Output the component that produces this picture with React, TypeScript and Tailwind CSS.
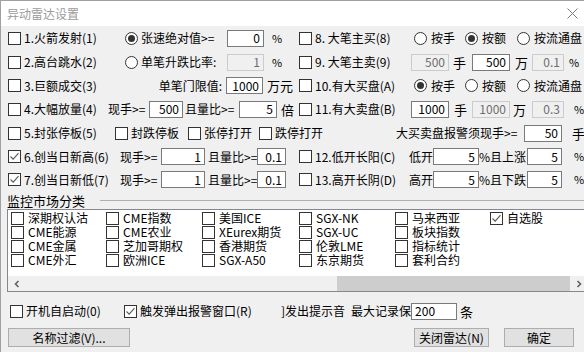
import clsx from "clsx";
import type { ReactNode } from "react";

// checkbox square, optional grey tick
const Box = ({ on }: { on?: boolean }) => (
  <span className="w-[13px] h-[13px] shrink-0 border border-[#333333] bg-white flex items-center justify-center">
    {on && (
      <svg width="11" height="11" viewBox="0 0 11 11">
        <path d="M1.5 5.5 4.2 8.2 9.5 2.2" fill="none" stroke="#5a5a5a" strokeWidth="1.1" />
      </svg>
    )}
  </span>
);

const Dot = ({ on }: { on?: boolean }) => (
  <span className="w-[13px] h-[13px] shrink-0 rounded-full border border-[#333333] bg-white flex items-center justify-center">
    {on && <span className="w-[7px] h-[7px] rounded-full bg-[#333333]" />}
  </span>
);

const Field = ({ v, w, off, left }: { v: string; w: string; off?: boolean; left?: boolean }) => (
  <span
    className={clsx(
      "h-[17px] shrink-0 border flex items-center px-[3px]",
      w,
      off ? "bg-[#f0f0f0] border-[#cccccc] text-[#6d6d6d]" : "bg-white border-[#7a7a7a] text-black",
      left ? "justify-start" : "justify-end"
    )}
  >
    {v}
  </span>
);

const Opt = ({ w, label, on, radio, gap = "ml-[3px]" }: { w?: string; label: string; on?: boolean; radio?: boolean; gap?: string }) => (
  <div className={clsx("flex items-center shrink-0 whitespace-nowrap", w)}>
    {radio ? <Dot on={on} /> : <Box on={on} />}
    <span className={gap}>{label}</span>
  </div>
);

const Txt = ({ cls, children }: { cls?: string; children: ReactNode }) => (
  <span className={clsx("shrink-0 whitespace-nowrap", cls)}>{children}</span>
);

const Row = ({ h, children }: { h: string; children: ReactNode }) => (
  <div className={clsx("flex items-center pl-[7px] shrink-0", h)}>{children}</div>
);

const Pct = ({ cls }: { cls?: string }) => <Txt cls={clsx("text-[11px]", cls)}>%</Txt>;

const Modes = ({ pick }: { pick: number }) => (
  <>
    <Opt w="w-[51px]" radio on={pick === 0} label="按手" gap="ml-[4px]" />
    <Opt w="w-[52px]" radio on={pick === 1} label="按额" gap="ml-[4px]" />
    <Opt radio on={pick === 2} label="按流通盘" gap="ml-[4px]" />
  </>
);

const markets: string[][] = [
  ["深期权认沽", "CME能源", "CME金属", "CME外汇"],
  ["CME指数", "CME农业", "芝加哥期权", "欧洲ICE"],
  ["美国ICE", "XEurex期货", "香港期货", "SGX-A50"],
  ["SGX-NK", "SGX-UC", "伦敦LME", "东京期货"],
  ["马来西亚", "板块指数", "指标统计", "套利合约"],
  ["自选股"],
];
const colW = ["w-[95px]", "w-[96px]", "w-[97px]", "w-[96px]", "w-[95px]", "w-[96px]"];

const Chevron = ({ right }: { right?: boolean }) => (
  <svg width="8" height="8" viewBox="0 0 8 8">
    <path d={right ? "M2.5 1 5.5 4 2.5 7" : "M5.5 1 2.5 4 5.5 7"} fill="none" stroke="#606060" strokeWidth="1.6" />
  </svg>
);

export default function App() {
  return (
    <div className="w-[584px] h-[352px] overflow-hidden bg-[#f0f0f0] border-t border-l border-[#a0a0a0] flex flex-col font-['Noto_Sans_CJK_SC',sans-serif] text-[12px] leading-none text-black">
      {/* title bar */}
      <div className="h-[25px] shrink-0 bg-white flex items-center justify-between pl-[6px] pr-[6px]">
        <span className="text-[12px] text-[#9a9a9a]">异动雷达设置</span>
        <svg width="11" height="11" viewBox="0 0 11 11">
          <path d="M0.5 0.5 10.5 10.5 M10.5 0.5 0.5 10.5" stroke="#7a7a7a" strokeWidth="1" />
        </svg>
      </div>

      <Row h="h-[24px]">
        <Opt w="w-[117px]" label="1.火箭发射(1)" />
        <Opt w="w-[102px]" radio on label="张速绝对值>=" />
        <Field v="0" w="w-[37px]" />
        <Pct cls="w-[35px] pl-[8px]" />
        <Opt w="w-[115px]" label="8. 大笔主买(8)" />
        <Modes pick={1} />
      </Row>

      <Row h="h-[24px]">
        <Opt w="w-[117px]" label="2.高台跳水(2)" />
        <Opt w="w-[102px]" radio label="单笔升跌比率:" />
        <Field v="1" w="w-[37px]" off />
        <Pct cls="w-[35px] pl-[8px]" />
        <Opt w="w-[112px]" label="9. 大笔主卖(9)" />
        <Field v="500" w="w-[38px]" off />
        <Txt cls="w-[23px] pl-[4px] text-[13px]">手</Txt>
        <Field v="500" w="w-[38px]" />
        <Txt cls="w-[22px] pl-[5px] text-[13px]">万</Txt>
        <Field v="0.1" w="w-[32px]" off />
        <Pct cls="pl-[5px]" />
      </Row>

      <Row h="h-[23px]">
        <Opt w="w-[117px]" label="3.巨额成交(3)" />
        <Txt cls="w-[101px] text-right pr-[4px]">单笔门限值:</Txt>
        <Field v="1000" w="w-[37px]" />
        <Txt cls="w-[36px] pl-[4px] text-[13px]">万元</Txt>
        <Opt w="w-[115px]" label="10.有大买盘(A)" />
        <Modes pick={0} />
      </Row>

      <Row h="h-[24px]">
        <Opt w="w-[100px]" label="4.大幅放量(4)" />
        <Txt cls="w-[41px]">现手&gt;=</Txt>
        <Field v="500" w="w-[34px]" />
        <Txt cls="w-[56px] pl-[2px]">且量比&gt;=</Txt>
        <Field v="5" w="w-[38px]" />
        <Txt cls="w-[22px] pl-[4px] text-[13px]">倍</Txt>
        <Opt w="w-[112px]" label="11.有大卖盘(B)" />
        <Field v="1000" w="w-[38px]" />
        <Txt cls="w-[23px] pl-[5px] text-[13px]">手</Txt>
        <Field v="1000" w="w-[38px]" off />
        <Txt cls="w-[22px] pl-[3px] text-[13px]">万</Txt>
        <Field v="0.3" w="w-[32px]" off />
        <Pct cls="pl-[10px]" />
      </Row>

      <Row h="h-[24px]">
        <Opt w="w-[107px]" label="5.封张停板(5)" />
        <Opt w="w-[73px]" label="封跌停板" />
        <Opt w="w-[71px]" label="张停打开" />
        <Opt w="w-[137px]" label="跌停打开" />
        <Txt cls="w-[128px]">大买卖盘报警须现手&gt;=</Txt>
        <Field v="50" w="w-[38px]" />
        <Txt cls="pl-[10px] text-[13px]">手</Txt>
      </Row>

      <Row h="h-[23px]">
        <Opt w="w-[112px]" on label="6.创当日新高(6)" />
        <Txt cls="w-[41px]">现手&gt;=</Txt>
        <Field v="1" w="w-[44px]" />
        <Txt cls="w-[52px] pl-[3px]">且量比&gt;=</Txt>
        <Field v="0.1" w="w-[29px]" />
        <span className="w-[13px] shrink-0" />
        <Opt w="w-[110px]" label="12.低开长阳(C)" />
        <Txt cls="w-[24px]">低开</Txt>
        <Field v="5" w="w-[46px]" />
        <Txt cls="w-[48px]">%且上涨</Txt>
        <Field v="5" w="w-[35px]" />
        <Pct cls="pl-[12px]" />
      </Row>

      <Row h="h-[23px]">
        <Opt w="w-[112px]" on label="7.创当日新低(7)" />
        <Txt cls="w-[41px]">现手&gt;=</Txt>
        <Field v="1" w="w-[44px]" />
        <Txt cls="w-[52px] pl-[3px]">且量比&gt;=</Txt>
        <Field v="0.1" w="w-[29px]" />
        <span className="w-[13px] shrink-0" />
        <Opt w="w-[110px]" label="13.高开长阴(D)" />
        <Txt cls="w-[24px]">高开</Txt>
        <Field v="5" w="w-[46px]" />
        <Txt cls="w-[48px]">%且下跌</Txt>
        <Field v="5" w="w-[35px]" />
        <Pct cls="pl-[12px]" />
      </Row>

      {/* group header */}
      <div className="h-[18px] shrink-0 flex items-center pl-[6px]">
        <span className="text-[13px]">监控市场分类</span>
        <span className="flex-1 ml-[15px] h-px bg-[#b0b0b0]" />
      </div>

      {/* market list */}
      <div className="ml-[6px] w-[583px] h-[83px] shrink-0 border border-[#828790] bg-white flex flex-col">
        <div className="flex pl-[3px] pt-[1px]">
          {markets.map((col, i) => (
            <div key={i} className={clsx("flex flex-col shrink-0", colW[i])}>
              {col.map((m) => (
                <div key={m} className="h-[14px] flex items-center">
                  <Box on={m === "自选股"} />
                  <span className="ml-[4px] whitespace-nowrap">{m}</span>
                </div>
              ))}
            </div>
          ))}
        </div>
        <div className="mt-auto h-[15px] bg-[#f0f0f0] flex items-center">
          <span className="w-[17px] h-full flex items-center justify-center">
            <Chevron />
          </span>
          <span className="ml-[312px] w-[233px] h-full bg-[#cdcdcd]" />
          <span className="w-[18px] h-full flex items-center justify-center">
            <Chevron right />
          </span>
        </div>
      </div>

      {/* options row */}
      <div className="mt-[7px] h-[24px] shrink-0 flex items-center pl-[9px]">
        <Opt w="w-[114px]" label="开机自启动(0)" />
        <Opt w="w-[157px]" on label="触发弹出报警窗口(R)" />
        <Txt>]发出提示音</Txt>
        <Txt cls="ml-[6px]">最大记录保</Txt>
        <Field v="200" w="w-[46px]" left />
        <Txt cls="ml-[3px] text-[13px]">条</Txt>
      </div>

      {/* buttons */}
      <div className="mt-[5px] h-[19px] shrink-0 flex items-center pl-[7px]">
        <button className="w-[122px] h-full border border-[#adadad] bg-[#e1e1e1] flex items-center justify-center">名称过滤(V)...</button>
        <button className="ml-[284px] w-[75px] h-full border border-[#adadad] bg-[#e1e1e1] flex items-center justify-center">关闭雷达(N)</button>
        <button className="ml-[15px] w-[70px] h-full border border-[#adadad] bg-[#e1e1e1] flex items-center justify-center">确定</button>
      </div>
    </div>
  );
}
